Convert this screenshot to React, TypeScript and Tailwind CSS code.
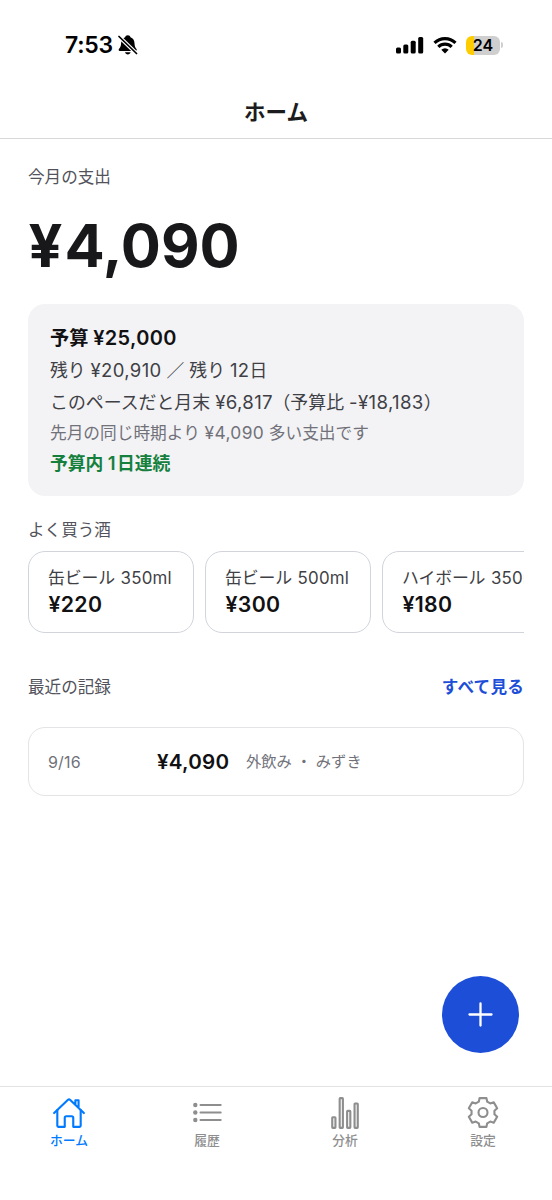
import type { ReactNode } from "react";
import { IoHomeOutline, IoStatsChartOutline } from "react-icons/io5";

function Num({ children }: { children: ReactNode }) {
  return <span className="text-[1.04em] tracking-[0.35px]">{children}</span>;
}

function StatusBar() {
  return (
    <div className="flex h-[90px] items-center justify-between pr-[49px] pl-[65px]">
      <div className="flex items-center gap-[5px]">
        <span className="text-[23px] leading-[28px] font-semibold tracking-[-0.3px] text-black">7:53</span>
        <svg width="20" height="20" viewBox="0 0 20 20" fill="#000">
          <path d="M9.800.3c1.500 0 2.400.8 2.700 1.900 2.700 1 3.900 3.300 4 6 .1 3.100.8 4.300 2 5.900.6.900.2 2-.9 2H1.800c-1.100 0-1.500-1.100-.9-2 1.200-1.600 2.100-2.800 2.200-5.900.1-2.700 1.300-5 4-6C7.400 1.100 8.300.3 9.800.3z" />
          <path d="M7 17.300h5.600c-.4 1.300-1.500 2.100-2.800 2.100S7.400 18.600 7 17.300z" />
          <path d="M0 .500l19.500 19" stroke="#fff" strokeWidth="3.800" />
          <path d="M1 1.500l17.500 17" stroke="#000" strokeWidth="1.700" strokeLinecap="round" />
        </svg>
      </div>
      <div className="flex items-center">
        <svg width="28" height="18" viewBox="0 0 28 18" fill="#000">
          <rect x="0" y="11.500" width="5" height="6" rx="1.500" />
          <rect x="7.300" y="8.500" width="5" height="9" rx="1.500" />
          <rect x="14.700" y="4.700" width="5" height="12.800" rx="1.500" />
          <rect x="22.200" y="1" width="5" height="16.500" rx="1.500" />
        </svg>
        <svg className="ml-[9px]" width="24" height="18" viewBox="0 0 24 18" fill="none" stroke="#000" strokeWidth="3.100">
          <path d="M1.500 6.900a15 15 0 0 1 21 0" />
          <path d="M5.300 10.900a9.500 9.500 0 0 1 13.400 0" />
          <path d="M12 17.500l-3.700-3.700a5.300 5.300 0 0 1 7.400 0z" fill="#000" stroke="none" />
        </svg>
        <div className="ml-[9px] flex h-[19px] w-[34px] items-center justify-center rounded-[6px] bg-[linear-gradient(90deg,#ffcc00_8px,#cfcfcf_8px)] text-[16px] leading-[19px] font-semibold text-black">
          24
        </div>
        <div className="ml-[1px] h-[6px] w-[2px] rounded-r-full bg-[#cfcfcf]" />
      </div>
    </div>
  );
}

function DrinkCard({ name, size, price }: { name: string; size: string; price: string }) {
  return (
    <div className="h-[82px] w-[166px] shrink-0 rounded-[17px] border-[1.4px] border-[#d1d5db] pt-[14px] pl-[19px]">
      <div className="h-[24px] text-[16.900px] leading-[24px] tracking-[-0.150px] whitespace-nowrap text-[#3f3f46]">
        {name} <span className="ml-[1px] tracking-[0.2px]">{size}</span>
      </div>
      <div className="h-[28px] pl-[0.500px] text-[21.300px] leading-[28px] font-semibold tracking-[0.3px] text-[#111113]">{price}</div>
    </div>
  );
}

function ListGlyph() {
  return (
    <svg width="29" height="34" viewBox="0 0 29 34" fill="none" stroke="currentColor" strokeWidth="2">
      {[9, 16.500, 24].map((y) => (
        <g key={y}>
          <circle cx="2.300" cy={y} r="2.200" fill="currentColor" stroke="none" />
          <path d={`M7.500 ${y}H27.700`} strokeLinecap="round" />
        </g>
      ))}
    </svg>
  );
}

const toothOutline = [
  [-4.2, -10.8],
  [-3.4, -14.4],
  [3.4, -14.4],
  [4.2, -10.8],
];

const gearPoints = [0, 60, 120, 180, 240, 300]
  .flatMap((deg) => {
    const a = (deg * Math.PI) / 180;
    return toothOutline.map(([x, y]) => {
      const px = 17 + x * Math.cos(a) - y * Math.sin(a);
      const py = 16.5 + x * Math.sin(a) + y * Math.cos(a);
      return `${px.toFixed(2)},${py.toFixed(2)}`;
    });
  })
  .join(" ");

function GearGlyph() {
  return (
    <svg width="34" height="34" viewBox="0 0 34 34" fill="none" stroke="currentColor" strokeWidth="2.100" strokeLinejoin="round">
      <polygon points={gearPoints} />
      <circle cx="17" cy="16.500" r="4.500" />
    </svg>
  );
}

const tabs = [
  { label: "ホーム", icon: <IoHomeOutline size={34} />, active: true },
  { label: "履歴", icon: <ListGlyph /> },
  { label: "分析", icon: <IoStatsChartOutline size={34} /> },
  { label: "設定", icon: <GearGlyph /> },
];

export default function App() {
  return (
    <div className="relative flex h-[1200px] w-[552px] flex-col overflow-hidden bg-white font-['Inter','Noto_Sans_CJK_JP',sans-serif] text-[#111113]">
      <StatusBar />
      <header className="flex h-[49px] items-center justify-center border-b border-[#d8d8d8] pb-[4px] text-[21.500px] leading-[30px] font-semibold text-[#1c1c1e]">
        ホーム
      </header>
      <main className="flex flex-1 flex-col px-[28px] pt-[26px]">
        <div className="h-[24px] text-[16.600px] leading-[24px] text-[#52525b]">今月の支出</div>
        <div className="mt-[20px] h-[72px] pl-[0.500px] text-[59.500px] leading-[72px] font-bold whitespace-nowrap text-[#18181b]">
          <span className="tracking-[2px]">¥</span>4,090
        </div>
        <section className="mt-[23px] h-[192px] rounded-[17px] bg-[#f3f3f5] pt-[20px] pl-[22px] whitespace-nowrap">
          <div className="h-[31px] text-[19.200px] leading-[29px] font-semibold">
            予算 <Num>¥25,000</Num>
          </div>
          <div className="h-[32px] text-[17.800px] leading-[30px] text-[#3f3f46]">
            残り <Num>¥20,910</Num> ／ 残り <Num>12</Num>日
          </div>
          <div className="h-[31px] text-[17.900px] leading-[31px] text-[#3f3f46]">
            このペースだと月末 <Num>¥6,817</Num>
            <span className="-ml-[0.500px]">（予算比 </span>
            <Num>-¥18,183</Num>）
          </div>
          <div className="h-[31px] text-[16.700px] leading-[29px] text-[#71717a]">
            先月の同じ時期より <Num>¥4,090</Num> 多い支出です
          </div>
          <div className="h-[31px] text-[17.800px] leading-[28px] font-semibold text-[#15803d]">
            予算内 <Num>1</Num>
            <span className="ml-[1px]">日連続</span>
          </div>
        </section>
        <div className="mt-[22px] h-[24px] text-[16.600px] leading-[24px] text-[#52525b]">よく買う酒</div>
        <div className="mt-[9px] flex gap-[11px] overflow-hidden">
          <DrinkCard name="缶ビール" size="350ml" price="¥220" />
          <DrinkCard name="缶ビール" size="500ml" price="¥300" />
          <DrinkCard name="ハイボール" size="350ml" price="¥180" />
        </div>
        <div className="mt-[42px] flex h-[24px] items-center justify-between text-[16.600px] leading-[24px]">
          <span className="text-[#52525b]">最近の記録</span>
          <span className="font-semibold tracking-[0.2px] text-[#1d4ed8]">すべて見る</span>
        </div>
        <div className="mt-[28px] flex h-[69px] items-center rounded-[17px] border-[1.400px] border-[#e4e4e7] pl-[19px] whitespace-nowrap">
          <span className="w-[109px] text-[16px] tracking-[0.2px] text-[#71717a]">9/16</span>
          <span className="w-[89px] pt-[2px] text-[20.600px] font-semibold tracking-[0.2px]">¥4,090</span>
          <span className="pt-[2px] text-[15.300px] text-[#71717a]">外飲み ・ みずき</span>
        </div>
      </main>
      <button aria-label="追加" className="absolute top-[976px] left-[442px] flex size-[77px] items-center justify-center rounded-full bg-[#1d4ed8]">
        <svg width="25" height="25" viewBox="0 0 25 25" stroke="#fff" strokeWidth="2.300" strokeLinecap="round">
          <path d="M12.500 1.500v22M1.500 12.500h22" />
        </svg>
      </button>
      <nav className="grid h-[114px] shrink-0 grid-cols-4 border-t border-[#e3e3e3]">
        {tabs.map((t) => (
          <div key={t.label} className={`flex flex-col items-center pt-[9px] ${t.active ? "text-[#007aff]" : "text-[#8e8e8f]"}`}>
            {t.icon}
            <span className="mt-[2px] text-[12.800px] leading-[18px] font-medium">{t.label}</span>
          </div>
        ))}
      </nav>
    </div>
  );
}
